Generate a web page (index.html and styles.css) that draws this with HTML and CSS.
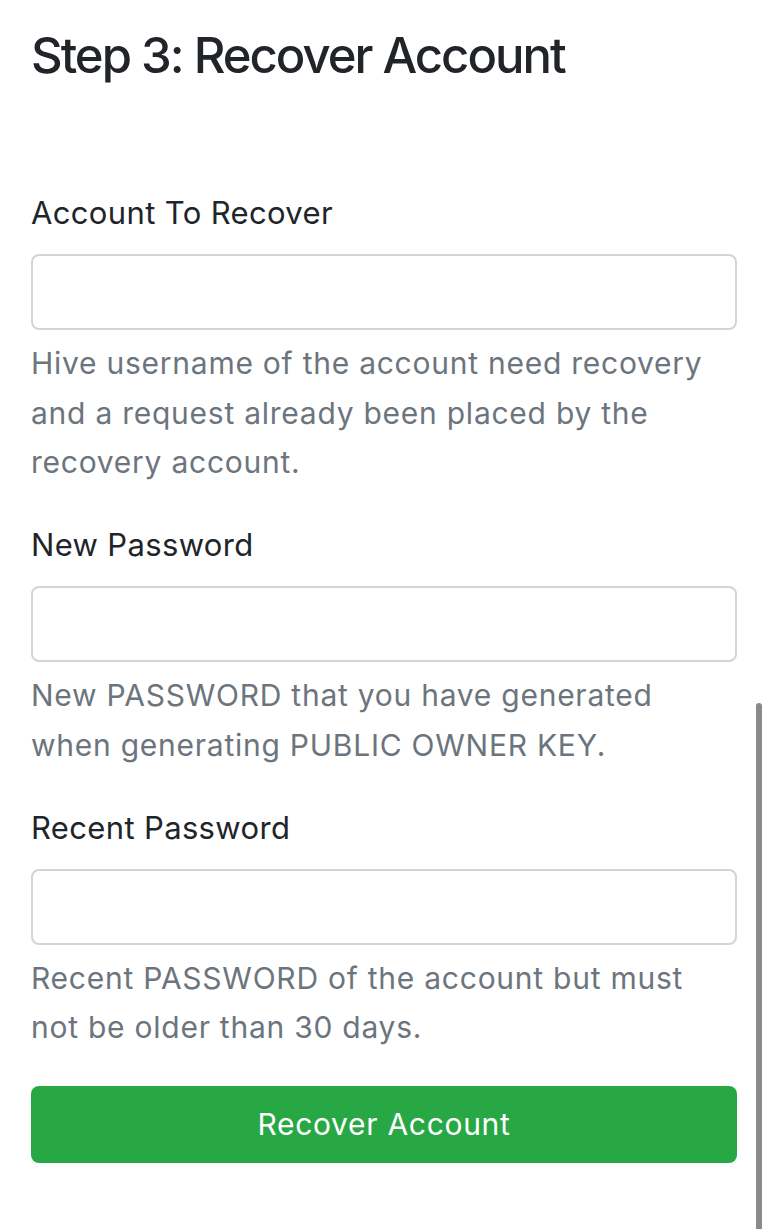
FILE: index.html
```html
<!DOCTYPE html>
<html lang="en">
<head>
<meta charset="utf-8">
<title>Step 3: Recover Account</title>
<link rel="stylesheet" href="styles.css">
</head>
<body>
<main class="page">
  <h1 class="title">Step 3: Recover Account</h1>
  <form class="form">
    <div class="group">
      <label class="label" for="acc">Account To Recover</label>
      <input class="input" id="acc" type="text">
      <p class="help">Hive username of the account need recovery and a request already been placed by the recovery account.</p>
    </div>
    <div class="group">
      <label class="label" for="newpw">New Password</label>
      <input class="input" id="newpw" type="password">
      <p class="help">New PASSWORD that you have generated when generating PUBLIC OWNER KEY.</p>
    </div>
    <div class="group">
      <label class="label" for="recpw">Recent Password</label>
      <input class="input" id="recpw" type="password">
      <p class="help">Recent PASSWORD of the account but must not be older than 30 days.</p>
    </div>
    <button class="btn" type="button">Recover Account</button>
  </form>
</main>
<div class="scrollbar"></div>
</body>
</html>
```
FILE: styles.css
```css
* { box-sizing: border-box; }
html, body { margin: 0; padding: 0; background: #ffffff; }
body {
  font-family: Inter, Roboto, "Noto Sans", sans-serif;
  color: #212529;
  height: 1229px;
  overflow: hidden;
  position: relative;
}
.page {
  padding: 0 31px;
}
.title {
  margin: 27px 0 0;
  font-size: 49px;
  line-height: 58px;
  font-weight: 500;
  letter-spacing: -2px;
  color: #212529;
}
.form {
  margin-top: 108px;
  display: flex;
  flex-direction: column;
}
.group {
  display: flex;
  flex-direction: column;
  margin-bottom: 37.5px;
}
.group:last-of-type { margin-bottom: 33px; }
.label {
  font-size: 31px;
  line-height: 40px;
  margin-bottom: 21px;
  letter-spacing: 0.35px;
  color: #212529;
}
.input {
  display: block;
  width: 100%;
  height: 76px;
  border: 2px solid #d3d4d9;
  border-radius: 8px;
  background: #fff;
  font-size: 28px;
  padding: 0 22px;
  outline: none;
}
.help {
  margin: 9px 0 0;
  font-size: 30px;
  line-height: 49.5px;
  letter-spacing: 0.75px;
  color: #6c757d;
}
.btn {
  width: 100%;
  height: 77px;
  border: none;
  border-radius: 8px;
  background: #28a745;
  color: #ffffff;
  font-family: inherit;
  font-size: 30px;
  letter-spacing: 0.7px;
  padding: 0;
}
.scrollbar {
  position: absolute;
  left: 756px;
  top: 703px;
  width: 6px;
  height: 540px;
  border-radius: 3px;
  background: #8a8a8a;
}
```
